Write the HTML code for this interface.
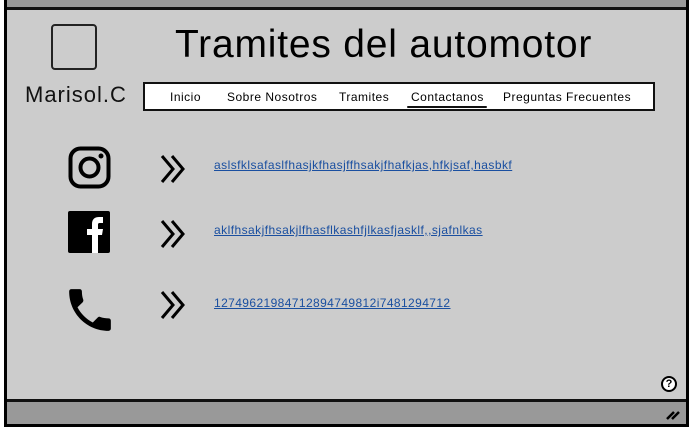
<!DOCTYPE html>
<html><head><style>
*{margin:0;padding:0;box-sizing:border-box}
body{width:695px;height:432px;background:#fff;position:relative;overflow:hidden;font-family:"Liberation Sans",sans-serif}
.frame{position:absolute;left:4px;top:-3px;width:685px;height:430px;border:3px solid #000;background:#ccc}
.topbar{position:absolute;left:0;top:0;width:100%;height:10px;background:#999;border-bottom:3px solid #111}
.botbar{position:absolute;left:0;bottom:0;width:100%;height:25px;background:#999;border-top:3px solid #111}
.abs{position:absolute}
a{color:#1a4fa0;text-decoration:underline;font-size:12px;white-space:nowrap}
.nav span{position:absolute;top:6px;font-size:12px;color:#000;letter-spacing:0.5px;white-space:nowrap}
</style></head><body>
<div class="frame">
<div class="topbar"></div>
<div class="botbar"></div>
</div>
<div class="abs" style="left:51px;top:24px;width:46px;height:46px;border:2px solid #222;border-radius:4px"></div>
<div class="abs" style="left:25px;top:82px;font-size:22px;color:#111;letter-spacing:1px">Marisol.C</div>
<div class="abs" style="left:175px;top:23px;font-size:39px;color:#000;letter-spacing:0.8px;white-space:nowrap">Tramites del automotor</div>
<div class="abs nav" style="left:143px;top:82px;width:512px;height:29px;background:#fff;border:2px solid #111">
<span style="left:25px">Inicio</span>
<span style="left:82px">Sobre Nosotros</span>
<span style="left:194px">Tramites</span>
<span style="left:266px">Contactanos</span>
<span style="left:358px">Preguntas Frecuentes</span>
<div class="abs" style="left:262px;top:22px;width:80px;height:2px;background:#111;border-radius:2px"></div>
</div>
<svg class="abs" style="left:68px;top:146px" width="43" height="43" viewBox="0 0 43 43"><rect x="2.5" y="2.5" width="38" height="38" rx="10" fill="none" stroke="#000" stroke-width="4"/><circle cx="21.5" cy="21.5" r="9" fill="none" stroke="#000" stroke-width="4"/><circle cx="33" cy="10" r="2.5"/></svg>
<svg class="abs" style="left:68px;top:211px" width="42" height="42" viewBox="0 0 42 42"><rect width="42" height="42" rx="2" fill="#000"/><path d="M24 42V24h-5v-6h5v-5c0-5 3-7 7-7h4v6h-3c-2 0-2 1-2 2v4h5l-1 6h-4v18z" fill="#fff"/></svg>
<svg class="abs" style="left:68px;top:288px" width="44" height="44" viewBox="2.5 2.5 19 19"><path d="M6.6 10.8c1.4 2.8 3.8 5.1 6.6 6.6l2.2-2.2c.3-.3.7-.4 1-.2 1.1.4 2.3.6 3.6.6.6 0 1 .4 1 1V20c0 .6-.4 1-1 1C10.6 21 3 13.4 3 4c0-.6.4-1 1-1h3.5c.6 0 1 .4 1 1 0 1.3.2 2.5.6 3.6.1.3 0 .7-.2 1z" fill="#000"/></svg>
<svg class="abs" style="left:160px;top:154px" width="28" height="30"><path d="M2 2l11 13L2 28M12 2l11 13-11 13" fill="none" stroke="#000" stroke-width="3"/></svg>
<svg class="abs" style="left:160px;top:219px" width="28" height="30"><path d="M2 2l11 13L2 28M12 2l11 13-11 13" fill="none" stroke="#000" stroke-width="3"/></svg>
<svg class="abs" style="left:160px;top:290px" width="28" height="30"><path d="M2 2l11 13L2 28M12 2l11 13-11 13" fill="none" stroke="#000" stroke-width="3"/></svg>
<a class="abs" style="left:214px;top:158px;letter-spacing:0.45px">aslsfklsafaslfhasjkfhasjffhsakjfhafkjas,hfkjsaf,hasbkf</a>
<a class="abs" style="left:214px;top:223px;letter-spacing:0.45px">aklfhsakjfhsakjlfhasflkashfjlkasfjasklf,,sjafnlkas</a>
<a class="abs" style="left:214px;top:296px;letter-spacing:0.4px">12749621984712894749812i7481294712</a>
<div class="abs" style="left:661px;top:376px;width:16px;height:16px;border-radius:50%;border:2px solid #000;background:#fff;font-size:11px;font-weight:bold;text-align:center;line-height:12px">?</div>
<svg class="abs" style="left:665px;top:407px" width="16" height="14"><path d="M2 12L9 5M7 12L14 5" stroke="#000" stroke-width="2.5"/></svg>
</body></html>
